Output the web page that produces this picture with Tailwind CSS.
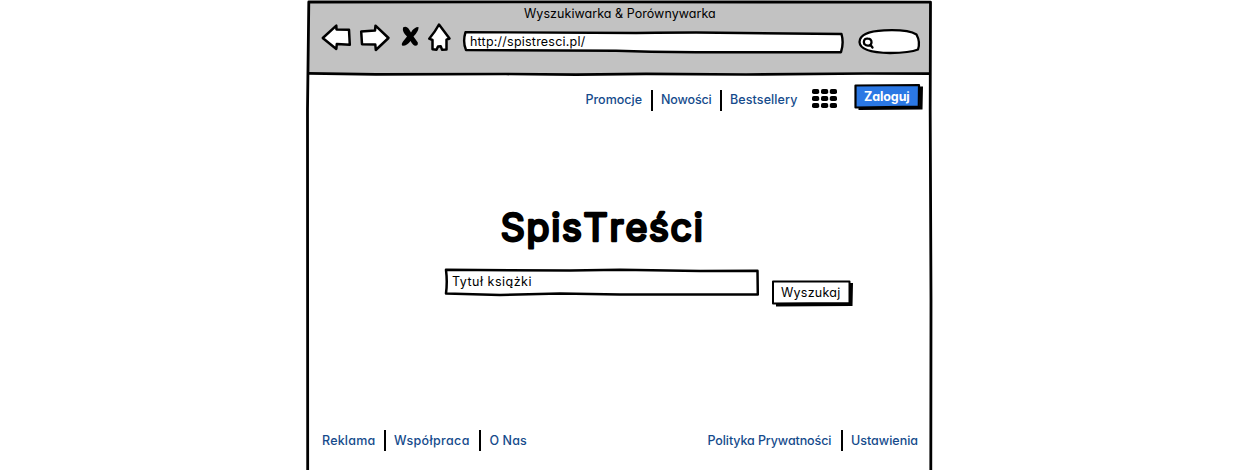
<!DOCTYPE html>
<html lang="pl">
<head>
<meta charset="utf-8">
<title>Wyszukiwarka &amp; Porównywarka</title>
<script src="https://cdn.jsdelivr.net/npm/@tailwindcss/browser@4"></script>
</head>
<body class="h-[470px] overflow-hidden bg-white font-['Inter',sans-serif] text-[12.5px] leading-4 text-black [font-feature-settings:'cv11','calt'_0]">
<div class="relative isolate ml-[306px] flex h-[470px] w-[627px] flex-col">
  <!-- window frame -->
  <svg class="absolute inset-0 -z-10" width="627" height="470" viewBox="0 0 627 470" fill="none" stroke="#000" stroke-linejoin="round">
    <path d="M2.500 2L624.500 2V74.500L2 73.500Z" fill="#c2c2c2" stroke="none"/>
    <path d="M1.700 472L1.500 110L2.800 2L300 1.800L624.500 2.200L624.200 110L625 300L624.800 472" stroke-width="2.800"/>
    <path d="M2 73.300L70 74.300L200 74L270 74.700L340 73.800L440 74.500L560 73.500L625 73.700" stroke-width="2.700"/>
  </svg>

  <header class="h-[75px]">
    <h1 class="flex h-[28px] pl-[218px] pt-[6px]"><span class="whitespace-nowrap tracking-[0.05px]">Wyszukiwarka &amp; Porównywarka</span></h1>
    <div class="flex h-[32px] items-start">
      <svg class="-mt-[8px] w-[150px] shrink-0" height="36" viewBox="0 20 150 36" stroke="#000" stroke-width="2.500" stroke-linejoin="round" stroke-linecap="round">
        <path d="M16.800 38L30.300 25.700L30.500 29.500L43 29.800L43.800 44.800L30.800 44L30.300 49L17 38.300Z" fill="#fff"/>
        <path d="M55.200 31.500L69 30.500L69.500 25.700L82.500 38L69.800 50L69.300 44.500L56 44.200Z" fill="#fff"/>
        <path d="M97 27.500Q100 25.500 102.500 28.500L105 32.500Q108 27 112.500 27Q113 31 107.500 36.500L111.800 42.500Q112.200 45.800 109.500 45.800Q107 45.500 104.500 41Q101 46 96.500 45.700Q94.800 44.500 97 41.500L101 36.500Q96 32 97 27.500Z" fill="#000" stroke="none"/>
        <path d="M133 24.500L143.500 38.500L140.500 39.700L140.500 49.500L136 49.700L134.800 46.300L132 46.500L130.500 49.800L126.500 49.300L126.500 40L123.200 38.700Q129 32 133 24.500Z" fill="#fff"/>
      </svg>
      <div class="relative isolate h-[26px] w-[394px] pl-[14px] pt-[6px]">
        <svg class="absolute inset-0 -z-10" width="394" height="26" viewBox="150 28 394 26" fill="#fff" stroke="#000" stroke-width="2.400" stroke-linejoin="round"><path d="M159.500 32.200L330 33L350 32.700L390 32.500L535.500 34Q538 43 535 52.200L390 52.200L345 51.700L310 50.800L160 50Q156.500 42 159.500 32.200Z"/></svg>
        <span class="tracking-[0.22px]">http://spistresci.pl/</span>
      </div>
      <svg class="shrink-0" width="78" height="28" viewBox="544 28 78 28" fill="#fff" stroke="#000" stroke-width="2.300" stroke-linejoin="round" stroke-linecap="round">
        <path d="M553.500 42Q554 31.500 578 30.400Q602 29.300 610.500 34.500Q614.500 42 612 49.500Q604 52.800 584 53Q554 52.500 553.500 42Z"/>
        <path d="M562 38.700C557.800 38 557.300 41.500 558.300 44C561 46.800 565.300 46 565.500 42.500C565.700 39.700 564 38.700 562 38.700ZM564.500 45L566.500 47.500"/>
      </svg>
    </div>
  </header>

  <nav class="flex h-[45px] pl-[279px] font-medium text-[#154b8c]">
    <a class="w-[66px] pl-[0.500px] pt-[17px]"><span>Promocje</span></a>
    <i class="mt-[15px] h-[21px] w-[2px] bg-black"></i>
    <a class="w-[67px] pl-[8px] pt-[17px]"><span class="tracking-[-0.15px]">Nowości</span></a>
    <i class="mt-[15px] h-[21px] w-[2px] bg-black"></i>
    <a class="w-[90px] pl-[8px] pt-[17px]"><span class="tracking-[0.1px]">Bestsellery</span></a>
    <svg class="mt-[13px] shrink-0" width="26" height="21" viewBox="0 0 26 21" fill="#000">
      <rect x="0" y="1" width="7.200" height="5" rx="1.800"/><rect x="9" y="1" width="7.200" height="5" rx="1.800"/><rect x="17.800" y="1" width="7.200" height="5" rx="1.800"/>
      <rect x="0" y="8" width="7.200" height="5" rx="1.800"/><rect x="9" y="8" width="7.200" height="5" rx="1.800"/><rect x="17.800" y="8" width="7.200" height="5" rx="1.800"/>
      <rect x="0" y="15" width="7.200" height="5" rx="1.800"/><rect x="9" y="15" width="7.200" height="5" rx="1.800"/><rect x="17.800" y="15" width="7.200" height="5" rx="1.800"/>
    </svg>
    <button class="relative isolate ml-[15px] mt-[8px] h-[29px] w-[71px] pb-[2px] pl-[11px] text-left font-bold text-white">
      <svg class="absolute inset-0 -z-10" width="71" height="29" viewBox="853 83 71 29"><path d="M858.500 107L919.500 106L920 86.500L923 86.500L922.500 109.500L858.500 110Z"/><path d="M855.500 85.500L919 85L918.800 106.500L855.500 107.500Z" fill="#2b78e4" stroke="#000" stroke-width="2.200" stroke-linejoin="round"/></svg>
      <span class="tracking-[-0.1px]">Zaloguj</span>
    </button>
  </nav>

  <main class="flex h-[306px] flex-col">
    <h2 class="mt-[82px] h-[60px] pl-[189px]">
      <svg width="220" height="56" viewBox="495 202 220 56" stroke="#000" stroke-width="2.700" stroke-linejoin="round" stroke-linecap="round"><text class="text-[37.5px] font-normal [font-kerning:none]" x="500.800" y="240.500" textLength="202">SpisTreści</text></svg>
    </h2>
    <form class="flex pl-[137px]">
      <label class="relative isolate h-[32px] w-[328px] pl-[9px] pt-[12px]">
        <svg class="absolute inset-0 -z-10" width="328" height="36" viewBox="443 262 328 36" fill="#fff" stroke="#000" stroke-width="2.500" stroke-linejoin="round"><path d="M446 269.800L570 270.500L620 269.800L700 271L757.500 270.700L757.800 294.500L620 294.500L560 293.500L500 295L446 293.500Q447.500 282 446 269.800Z"/></svg>
        <span class="tracking-[0.5px]">Tytuł książki</span>
      </label>
      <button type="button" class="relative isolate mt-[17px] h-[29px] w-[83px] pb-[2px] pl-[10px] text-left">
        <svg class="absolute inset-0 -z-10" width="83" height="29" viewBox="771 279 83 29"><path d="M776 304L850 303L850 283L853 283L852.500 306L776 306.500Z"/><path d="M773 281.500L849.500 281.500L849.500 303L773 303.500Z" fill="#fff" stroke="#000" stroke-width="2" stroke-linejoin="round"/></svg>
        <span class="tracking-[0.25px]">Wyszukaj</span>
      </button>
    </form>
  </main>

  <footer class="flex h-[44px] pl-[15px] pt-[4px] font-medium text-[#154b8c]">
    <a class="w-[63px] pl-[1px] pt-[3px]"><span class="tracking-[0.2px]">Reklama</span></a>
    <i class="h-[21px] w-[2px] bg-black"></i>
    <a class="w-[93px] pl-[8px] pt-[3px]"><span class="tracking-[0.35px]">Współpraca</span></a>
    <i class="h-[21px] w-[2px] bg-black"></i>
    <a class="w-[226px] pl-[8.500px] pt-[3px]"><span class="tracking-[0.1px]">O Nas</span></a>
    <a class="w-[134px] whitespace-nowrap pl-[0.500px] pt-[3px]"><span class="tracking-[-0.1px]">Polityka Prywatności</span></a>
    <i class="h-[21px] w-[2px] bg-black"></i>
    <a class="pl-[8px] pt-[3px]"><span>Ustawienia</span></a>
  </footer>
</div>
</body>
</html>
